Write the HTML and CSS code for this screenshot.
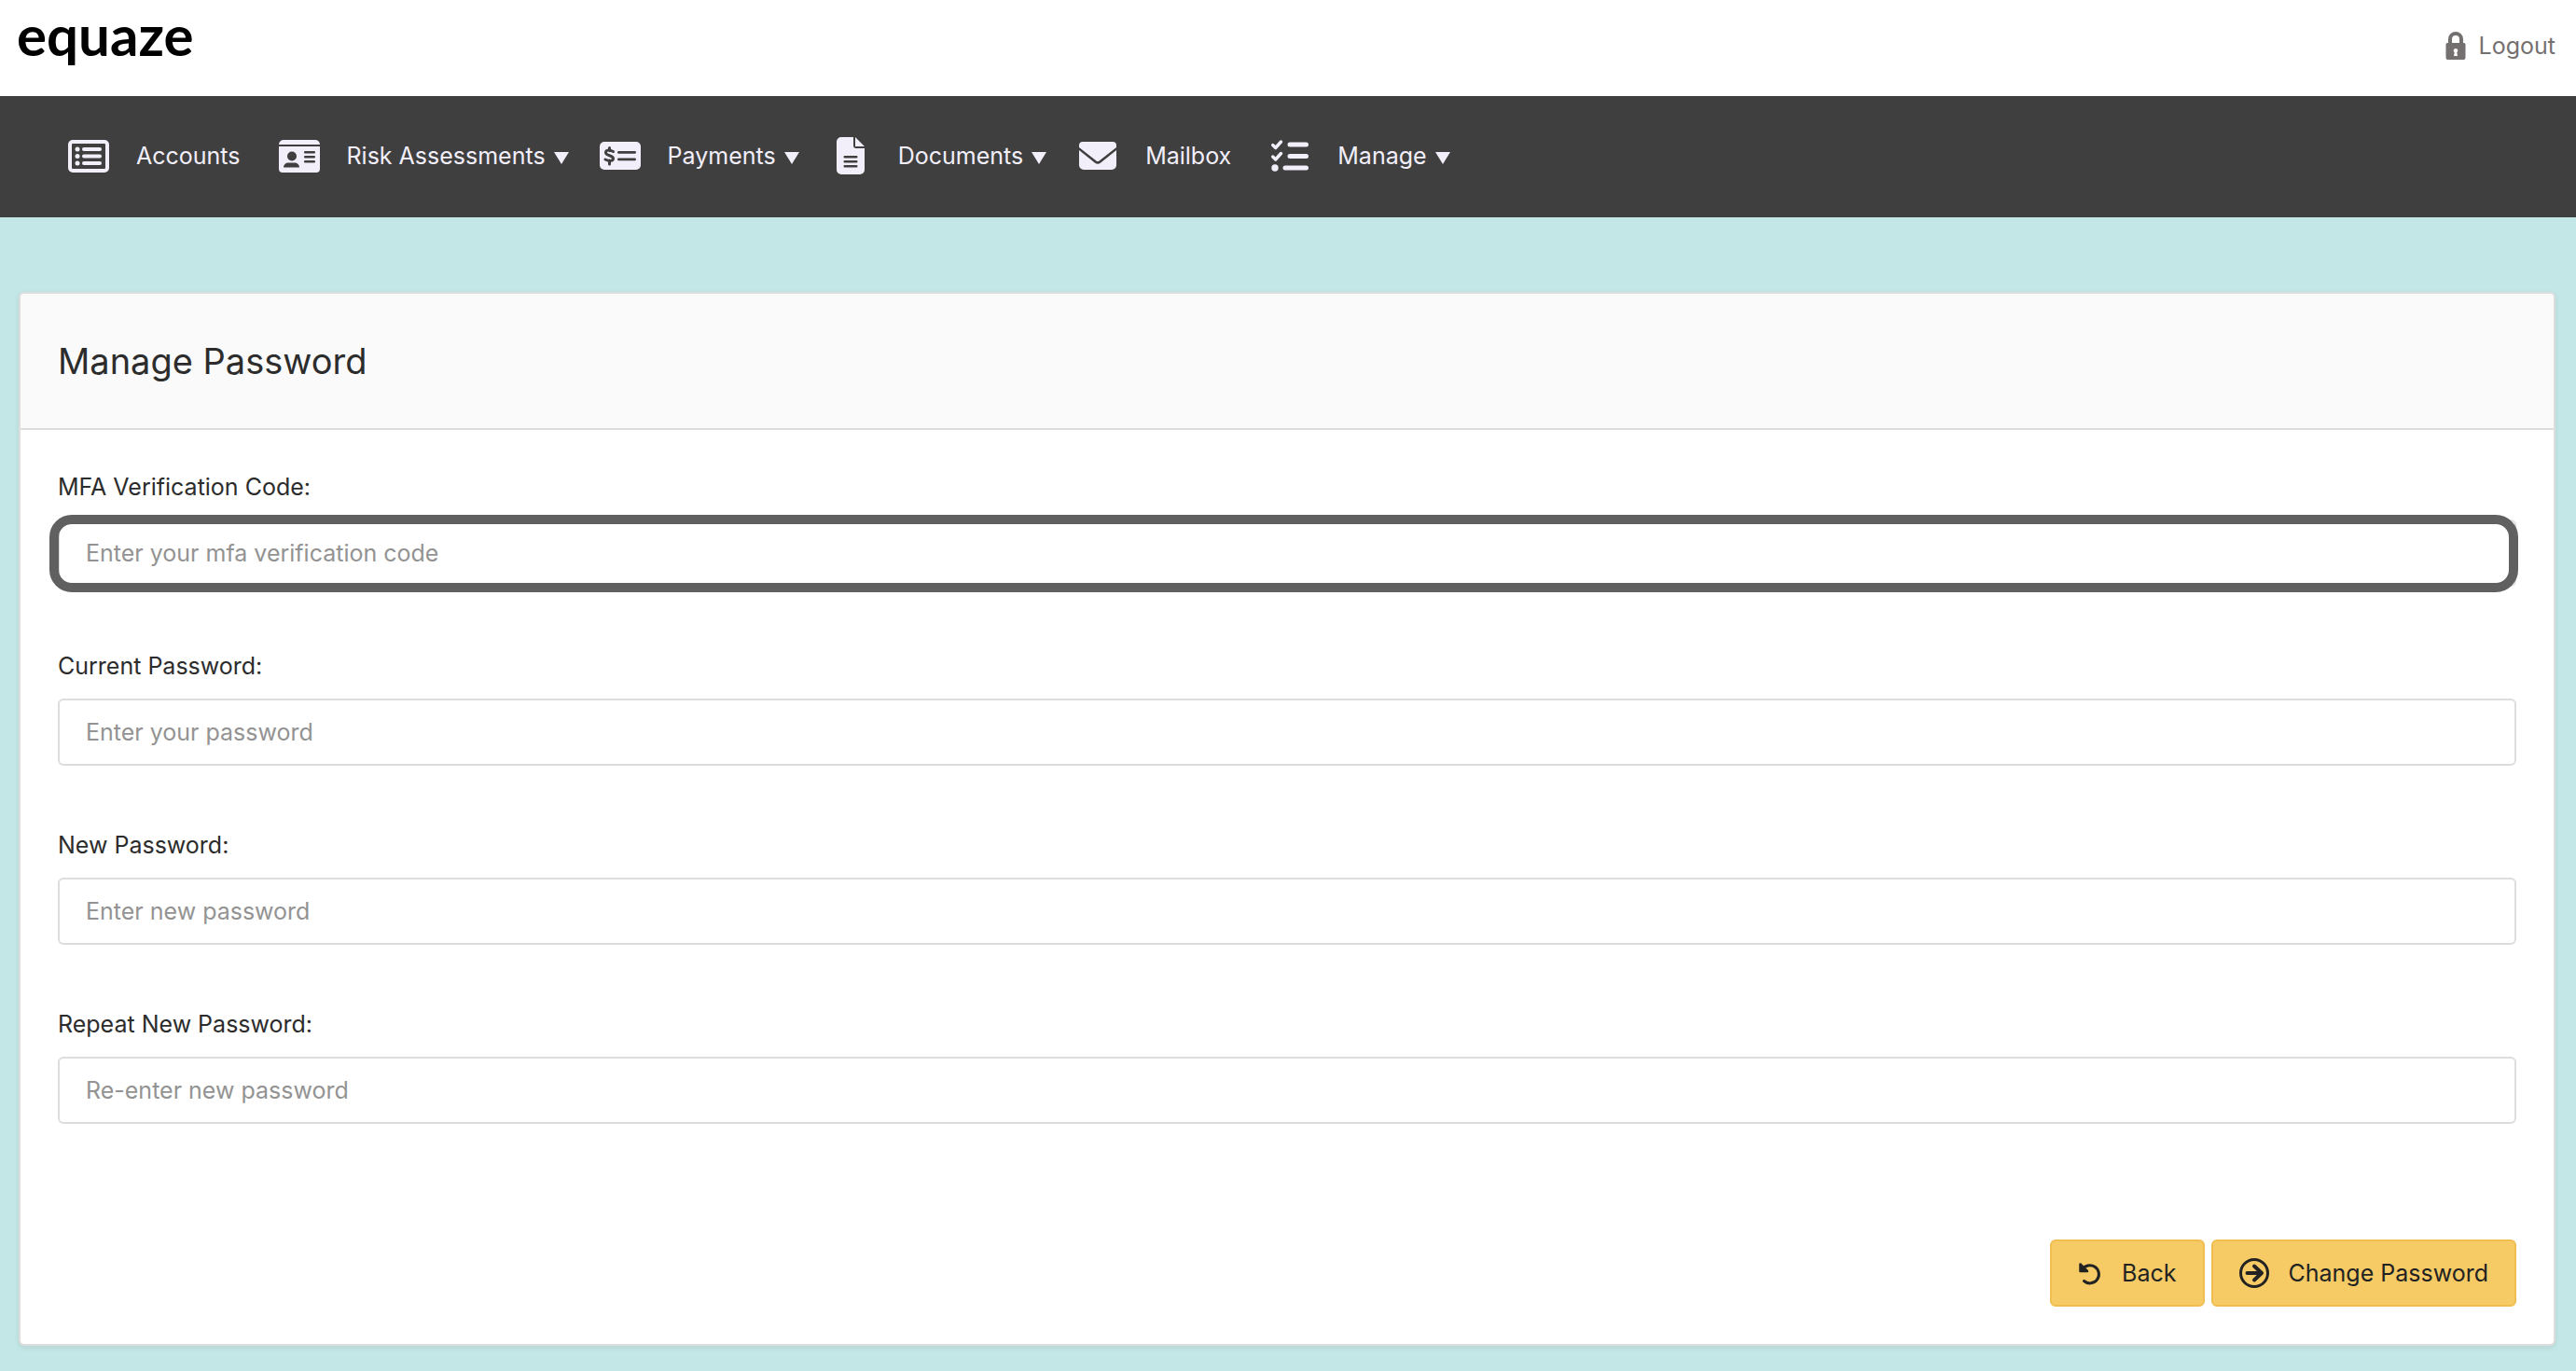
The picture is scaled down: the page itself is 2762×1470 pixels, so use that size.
FILE: index.html
```html
<!DOCTYPE html>
<html lang="en">
<head>
<meta charset="utf-8">
<meta name="viewport" content="width=device-width, initial-scale=1">
<title>Manage Password</title>
<link rel="stylesheet" href="styles.css">
</head>
<body>
<header class="topbar">
  <a class="logo" href="#">equaze</a>
  <a class="logout" href="#">
    <svg class="lock" viewBox="0 0 22 30" aria-hidden="true"><path d="M5 13V8a6 6 0 0 1 12 0v5" fill="none" stroke="currentColor" stroke-width="4"/><path fill="currentColor" fill-rule="evenodd" d="M2 12h18a1.500 1.500 0 0 1 1.500 1.500V28a2 2 0 0 1-2 2h-17a2 2 0 0 1-2-2V13.500A1.500 1.500 0 0 1 2 12zM11 18a2.300 2.300 0 0 0-1.300 4.200L9 26h4l-.7-3.800A2.300 2.300 0 0 0 11 18z"/></svg>
    <span>Logout</span>
  </a>
</header>
<nav class="nav" aria-label="Main">
  <a class="nav-item" href="#">
    <svg class="icon" viewBox="0 0 46 40" aria-hidden="true"><rect x="3" y="5" width="40" height="31" rx="3" fill="none" stroke="currentColor" stroke-width="4"/><g fill="currentColor"><circle cx="11" cy="13" r="2.500"/><circle cx="11" cy="20.500" r="2.500"/><circle cx="11" cy="28" r="2.500"/><rect x="16" y="11" width="21" height="4" rx="2"/><rect x="16" y="18.500" width="21" height="4" rx="2"/><rect x="16" y="26" width="21" height="4" rx="2"/></g></svg>
    <span>Accounts</span>
  </a>
  <button class="nav-item" type="button">
    <svg class="icon" viewBox="0 0 46 40" aria-hidden="true"><path fill="currentColor" d="M1 8a5 5 0 0 1 5-5h34a5 5 0 0 1 5 5z"/><rect x="1" y="10" width="44" height="28" rx="4" fill="currentColor"/><path fill="currentColor" d="M1 10h44v6H1z"/><g class="cut"><circle cx="15" cy="20.500" r="5"/><path d="M6 32.500a5 5 0 0 1 5-5h7a5 5 0 0 1 5 5z"/><rect x="28" y="15" width="12" height="2.500" rx="1"/><rect x="28" y="20" width="12" height="2.500" rx="1"/><rect x="28" y="25" width="12" height="2.500" rx="1"/></g></svg>
    <span>Risk Assessments</span><i class="caret"></i>
  </button>
  <button class="nav-item" type="button">
    <svg class="icon" viewBox="0 0 46 40" aria-hidden="true"><rect x="1" y="5" width="44" height="30" rx="5" fill="currentColor"/><g class="cut"><rect x="20" y="15" width="20" height="2.800" rx="1.400"/><rect x="20" y="22.500" width="20" height="2.800" rx="1.400"/></g><path class="cut-line" d="M15.500 15.500c-5-2.500-8-1.500-8 1 0 4 8 2.500 8 6.500 0 3-4.500 3-8.500 1M11.500 11.500v3M11.500 25v4"/></svg>
    <span>Payments</span><i class="caret"></i>
  </button>
  <button class="nav-item" type="button">
    <svg class="icon" viewBox="0 0 46 40" aria-hidden="true"><path fill="currentColor" d="M13 0h13v9a3 3 0 0 0 3 3h9v23a5 5 0 0 1-5 5H13a5 5 0 0 1-5-5V5a5 5 0 0 1 5-5zM28 0l10 10h-10z"/><g class="cut"><rect x="15.500" y="20" width="15" height="2.500" rx="1"/><rect x="15.500" y="25" width="15" height="2.500" rx="1"/><rect x="15.500" y="30" width="15" height="2.500" rx="1"/></g></svg>
    <span>Documents</span><i class="caret"></i>
  </button>
  <a class="nav-item" href="#">
    <svg class="icon" viewBox="0 0 46 40" aria-hidden="true"><path fill="currentColor" d="M7 5h32a4 4 0 0 1 4 4v2L24.500 25.500a2.500 2.500 0 0 1-3 0L3 11V9a4 4 0 0 1 4-4zM3 14l16.800 13.500a5 5 0 0 0 6.400 0L43 14v16a5 5 0 0 1-5 5H8a5 5 0 0 1-5-5z"/></svg>
    <span>Mailbox</span>
  </a>
  <button class="nav-item" type="button">
    <svg class="icon" viewBox="0 0 46 40" aria-hidden="true"><g fill="none" stroke="currentColor" stroke-linecap="round" stroke-linejoin="round"><path stroke-width="3.400" d="M4.700 8.500l3 3L13.500 5M4.700 21l3 3 5.800-6.500"/><path stroke-width="5" d="M23 8h17.500M23 20.500h17.500M18 33h22.500"/></g><circle cx="7" cy="33" r="3.700" fill="currentColor"/></svg>
    <span>Manage</span><i class="caret"></i>
  </button>
</nav>
<main class="content">
  <form class="card">
    <div class="card-head"><h1>Manage Password</h1></div>
    <div class="card-body">
      <div class="field">
        <label for="mfa">MFA Verification Code:</label>
        <div class="control control-focused"><input id="mfa" type="text" placeholder="Enter your mfa verification code"></div>
      </div>
      <div class="field">
        <label for="current">Current Password:</label>
        <div class="control"><input id="current" type="password" placeholder="Enter your password"></div>
      </div>
      <div class="field">
        <label for="new">New Password:</label>
        <div class="control"><input id="new" type="password" placeholder="Enter new password"></div>
      </div>
      <div class="field">
        <label for="repeat">Repeat New Password:</label>
        <div class="control"><input id="repeat" type="password" placeholder="Re-enter new password"></div>
      </div>
      <div class="actions">
        <button class="btn" type="button">
          <svg class="icon-back" viewBox="0 0 26 26" aria-hidden="true"><path d="M4.500 9.500A9.600 9.600 0 1 1 6.500 21.500" fill="none" stroke="currentColor" stroke-width="3" stroke-linecap="round"/><path d="M2.500 3.500v7.500h7.500z" fill="currentColor" stroke="currentColor" stroke-width="2.500" stroke-linejoin="round"/></svg>
          <span>Back</span>
        </button>
        <button class="btn" type="submit">
          <svg class="icon-go" viewBox="0 0 32 32" aria-hidden="true"><g fill="none" stroke="currentColor" stroke-linecap="round" stroke-linejoin="round"><circle cx="16" cy="16" r="14.500" stroke-width="3"/><path d="M8.500 16H24M16 8.500l8 7.500-8 7.500" stroke-width="4"/></g></svg>
          <span>Change Password</span>
        </button>
      </div>
    </div>
  </form>
</main>
</body>
</html>
```
FILE: styles.css
```css
* { box-sizing: border-box; }
body {
  margin: 0;
  min-height: 100vh;
  background: #c3e7e6;
  color: #2c2c2c;
  font: 25px/40px Inter, "Liberation Sans", sans-serif;
}
button, input { font: inherit; }
a { color: inherit; text-decoration: none; }

.topbar {
  display: flex;
  justify-content: space-between;
  align-items: center;
  height: 103px;
  padding: 0 22px 6px 18px;
  background: #fff;
}
.logo { color: #000; font: 700 60px/80px Lato, sans-serif; padding-bottom: 24px; }
.logout { display: flex; align-items: center; gap: 14px; color: #757070; }
.lock { width: 22px; height: 30px; }

.nav {
  display: flex;
  flex-wrap: wrap;
  align-items: center;
  gap: 32px;
  min-height: 130px;
  padding: 0 72px 3px;
  background: #3f3f3f;
  color: #f2effb;
}
.nav-item {
  display: flex;
  align-items: center;
  padding: 0;
  border: 0;
  background: none;
  color: inherit;
}
a.nav-item { padding-right: 8px; }
.icon { width: 46px; height: 40px; margin-right: 28px; }
.cut { fill: #3f3f3f; }
.cut-line { fill: none; stroke: #3f3f3f; stroke-width: 3; stroke-linecap: round; }
.caret {
  margin: 6px 0 0 9px;
  border: 8px solid transparent;
  border-top: 13px solid;
  border-bottom: 0;
}

.content { padding: 80px 22px 27px 20px; }
.card {
  border: 2px solid #ddd;
  border-radius: 6px;
  background: #fff;
  box-shadow: 0 2px 6px rgba(0, 0, 0, .08);
}
.card-head {
  padding: 48px 40px;
  border-bottom: 2px solid #ddd;
  border-radius: 4px 4px 0 0;
  background: #fafafa;
}
h1 { margin: 0; font-size: 38px; line-height: 48px; font-weight: 400; }
.card-body { padding: 41px 40px 40px; }
.field { margin-bottom: 65px; }
.field label { display: block; margin-bottom: 15px; }
.control { position: relative; }
.control input {
  display: block;
  width: 100%;
  height: 72px;
  padding: 0 28px;
  border: 2px solid #ddd;
  border-radius: 6px;
  background: #fff;
  color: #333;
}
.control input::placeholder { color: #939393; opacity: 1; }
.control-focused::after {
  content: "";
  position: absolute;
  inset: -5px -2px -6px -9px;
  border: 10px solid #606060;
  border-radius: 24px;
  pointer-events: none;
}
.actions { display: flex; justify-content: flex-end; gap: 7px; padding-top: 59px; }
.btn {
  display: flex;
  align-items: center;
  gap: 21px;
  height: 72px;
  padding: 0 28px;
  border: 2px solid #f0be50;
  border-radius: 6px;
  background: #f6cb66;
  color: #222;
}
.icon-back { width: 26px; height: 26px; }
.icon-go { width: 32px; height: 32px; }
```
